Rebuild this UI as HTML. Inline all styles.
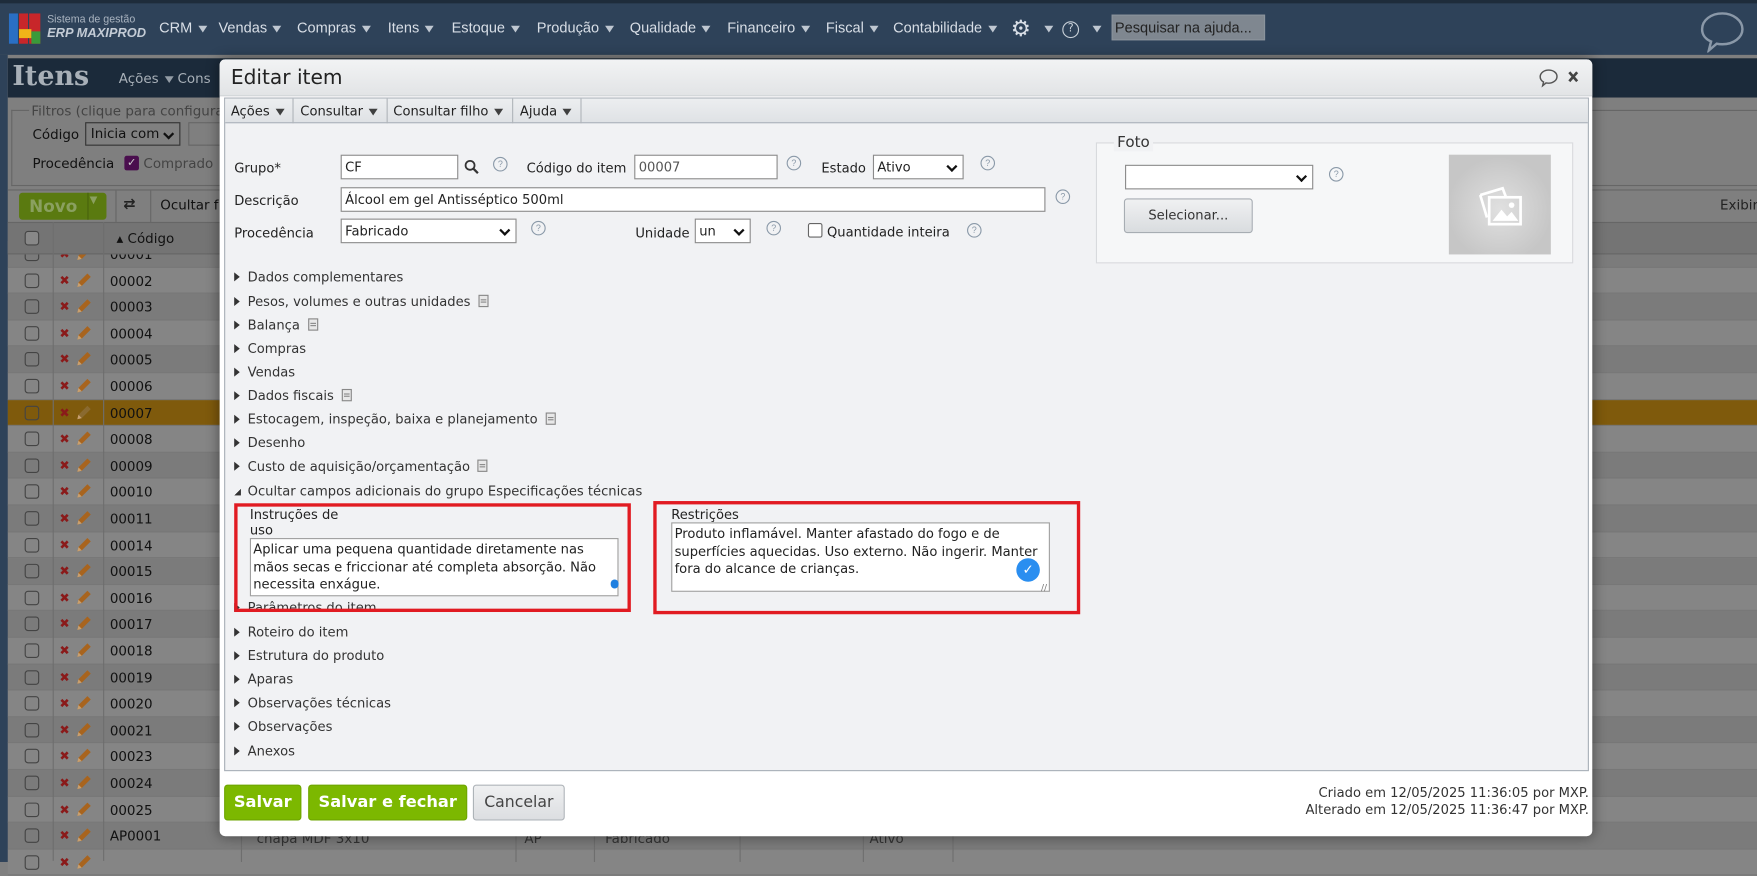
<!DOCTYPE html>
<html><head><meta charset="utf-8">
<style>
*{box-sizing:border-box;margin:0;padding:0}
html,body{width:1757px;height:862px;overflow:hidden;background:#808080}
#s{position:absolute;left:0;top:0;width:1568px;height:769px;transform:scale(1.12054,1.1209);transform-origin:0 0;font-family:"DejaVu Sans","Liberation Sans",sans-serif;font-size:11.7px;color:#222;background:#7f7f7f}
.a{position:absolute;white-space:nowrap}
.nav{position:absolute;left:0;top:0;width:1568px;height:49px;background:#2e4259;border-top:3px solid #1e2c3b}
.nm{position:absolute;top:17px;color:#d8dee6;font-family:"Liberation Sans",sans-serif;font-size:13px}
.dn{display:inline-block;width:0;height:0;border-left:4px solid transparent;border-right:4px solid transparent;border-top:6px solid currentColor;vertical-align:middle;margin-left:5px;opacity:.85}
.row{position:absolute;left:7px;width:1561px;height:23.7px;border-bottom:1px solid #777}
.cb{position:absolute;width:13px;height:13px;border:1px solid #444;border-radius:3px;background:#888}
.q{position:absolute;width:13px;height:13px;border:1px solid #8a99a8;border-radius:50%;font-size:8px;line-height:11px;text-align:center;color:#8a99a8;font-family:"Liberation Sans",sans-serif}
.inp{position:absolute;height:22px;border:1px solid #8b8b8b;background:#fff;padding:3px 3px;font-size:11.7px;line-height:14px}
.sel:after{content:"";position:absolute;right:6px;top:6px;width:5px;height:5px;border-right:2px solid #111;border-bottom:2px solid #111;transform:rotate(45deg)}
.sec{position:absolute;left:209px;font-size:11.7px;color:#333}
.sec i{display:inline-block;width:0;height:0;border-left:5px solid #333;border-top:4px solid transparent;border-bottom:4px solid transparent;margin-right:7px;vertical-align:0px}
.doc{display:inline-block;width:9px;height:11px;border:1px solid #888;margin-left:7px;vertical-align:-1px;background:linear-gradient(#888,#888) 1px 3px/5px 1px no-repeat,linear-gradient(#888,#888) 1px 5px/5px 1px no-repeat,#e8e8e8}
.tb{position:absolute;top:88px;height:22px;font-size:11.7px;line-height:22px;color:#222}
.sep{position:absolute;top:88px;width:1px;height:22px;background:#b0b5ba}
.btn{position:absolute;top:700px;height:32px;border-radius:3px;font-weight:bold;font-size:14.5px;line-height:31px;text-align:center;color:#fff;background:#7cb800;border:1px solid #6ea500}
</style></head><body><div id="s">

<!-- top nav -->
<div class="nav"></div>
<div class="a" style="left:8px;top:12px;width:8px;height:27px;background:#2a6fc4"></div>
<div class="a" style="left:17px;top:12px;width:8px;height:27px;background:#c8262a"></div>
<div class="a" style="left:26px;top:12px;width:10px;height:27px;background:#c8262a"></div>
<div class="a" style="left:17px;top:26px;width:11px;height:8px;background:#f0b419"></div>
<div class="a" style="left:28px;top:28px;width:8px;height:11px;background:#3a9a3a"></div>
<div class="a" style="left:42px;top:12px;color:#aab4c0;font-size:9.5px;font-family:'Liberation Sans',sans-serif">Sistema de gestão</div>
<div class="a" style="left:42px;top:24px;color:#c4ccd6;font-size:11.5px;font-style:italic;font-weight:bold;font-family:'Liberation Sans',sans-serif">ERP MAXIPROD</div>
<div class="nm" style="left:142px">CRM<span class="dn"></span></div>
<div class="nm" style="left:195px">Vendas<span class="dn"></span></div>
<div class="nm" style="left:265px">Compras<span class="dn"></span></div>
<div class="nm" style="left:346px">Itens<span class="dn"></span></div>
<div class="nm" style="left:403px">Estoque<span class="dn"></span></div>
<div class="nm" style="left:479px">Produção<span class="dn"></span></div>
<div class="nm" style="left:562px">Qualidade<span class="dn"></span></div>
<div class="nm" style="left:649px">Financeiro<span class="dn"></span></div>
<div class="nm" style="left:737px">Fiscal<span class="dn"></span></div>
<div class="nm" style="left:797px">Contabilidade<span class="dn"></span></div>
<div class="nm" style="left:902px;top:13px;font-size:20px">⚙</div>
<div class="nm" style="left:927px;top:17px"><span class="dn"></span></div>
<div class="a" style="left:948px;top:19px;width:15px;height:15px;border:1.5px solid #c8d0d8;border-radius:50%;color:#c8d0d8;font-size:10px;text-align:center;line-height:12px">?</div>
<div class="nm" style="left:970px;top:17px"><span class="dn"></span></div>
<div class="a" style="left:992px;top:13px;width:137px;height:23px;background:#7f8790;border:1px solid #8a939c;color:#222;font-family:'Liberation Sans',sans-serif;font-size:13px;line-height:21px;padding-left:2px">Pesquisar na ajuda...</div>
<svg class="a" style="left:1516px;top:9px" width="42" height="38" viewBox="0 0 42 38"><path d="M21 3C11 3 3 9 3 17c0 5 3 9 8 11l-2 8 7-6c2 .5 3 .5 5 .5 10 0 18-6 18-13.5S31 3 21 3z" fill="none" stroke="#8a98a8" stroke-width="2.2"/></svg>

<!-- background page (dimmed) -->
<div class="a" style="left:0;top:49px;width:7px;height:720px;background:#2e4259"></div>

<div id="rows"></div>
<script>
(function(){
var codes=["00001","00002","00003","00004","00005","00006","00007","00008","00009","00010","00011","00014","00015","00016","00017","00018","00019","00020","00021","00023","00024","00025","AP0001",""];
var h="";
for(var i=0;i<codes.length;i++){
 var y=215+i*23.6;
 var hl=codes[i]=="00007";
 var bg=hl?"#7f5a0c":(i%2?"#858585":"#7b7b7b");
 h+='<div class="row" style="top:'+y+'px;background:'+bg+'"></div>';
 h+='<div class="cb" style="left:22px;top:'+(y+5)+'px;background:'+bg+'"></div>';
 h+='<div class="a" style="left:53px;top:'+(y+5)+'px;color:#8a1a1a;font-weight:bold;font-size:11px">✖</div>';
 h+='<svg class="a" style="left:66px;top:'+(y+3)+'px" width="16" height="16" viewBox="0 0 16 16"><path d="M3 14l1-4 8-8 3 3-8 8z" fill="'+(hl?"#8a6a30":"#a8641e")+'"/><path d="M3 14l1-4 3 3z" fill="#c8a070"/></svg>';
 h+='<div class="a" style="left:98px;top:'+(y+5)+'px;color:#111;font-size:12px">'+codes[i]+'</div>';
}
document.getElementById("rows").innerHTML=h;
})();
</script>

<div class="a" style="left:7px;top:49px;width:1561px;height:177px;background:#7f7f7f"></div>
<div class="a" style="left:7px;top:52px;width:1561px;height:35px;background:#1b2a3a"></div>
<div class="a" style="left:11px;top:53px;color:#a8b0b8;font-family:'DejaVu Serif','Liberation Serif',serif;font-weight:bold;font-size:24px">Itens</div>
<div class="a" style="left:106px;top:63px;color:#a8b0b8;font-size:12px">Ações<span class="dn"></span> Cons</div>
<div class="a" style="left:10px;top:98px;width:1558px;height:68px;border:1px solid #666;border-right:none"></div>
<div class="a" style="left:26px;top:92px;background:#7f7f7f;color:#444;padding:0 2px;font-size:12px">Filtros (clique para configura</div>
<div class="a" style="left:29px;top:113px;color:#111;font-size:12px">Código</div>
<div class="inp sel" style="left:76px;top:109px;width:85px;height:21px;background:#808080;border-color:#333;color:#111;font-size:12px;padding:2px 4px">Inicia com</div>
<div class="a" style="left:168px;top:109px;width:40px;height:21px;border:1px solid #666"></div>
<div class="a" style="left:29px;top:139px;color:#111;font-size:12px">Procedência</div>
<div class="a" style="left:111px;top:139px;width:13px;height:13px;background:#4a0e4e;border-radius:2px;color:#ccc;font-size:10px;line-height:13px;text-align:center">✓</div>
<div class="a" style="left:128px;top:139px;color:#444;font-size:12px">Comprado</div>
<div class="a" style="left:7px;top:169px;width:1561px;height:1px;background:#666"></div>
<div class="a" style="left:17px;top:172px;width:78px;height:24px;background:#5a7a10;border-radius:3px;color:#8aa060;font-weight:bold;font-size:15px;line-height:24px;padding-left:9px">Novo</div>
<div class="a" style="left:78px;top:172px;width:1px;height:24px;background:#48620c"></div>
<div class="a" style="left:80px;top:174px;color:#8aa060;font-size:9px">▼</div>
<div class="a" style="left:103px;top:170px;width:1px;height:28px;background:#666"></div>
<div class="a" style="left:110px;top:175px;color:#222;font-size:13px;font-weight:bold">⇄</div>
<div class="a" style="left:134px;top:170px;width:1px;height:28px;background:#666"></div>
<div class="a" style="left:143px;top:176px;color:#111;font-size:12px">Ocultar f</div>
<div class="a" style="left:1535px;top:176px;color:#222;font-size:12px">Exibir</div>
<div class="a" style="left:7px;top:198px;width:1561px;height:29px;background:#747474;border-top:1px solid #666;border-bottom:1px solid #666"></div>
<div class="cb" style="left:22px;top:206px"></div>
<div class="a" style="left:47px;top:198px;width:1px;height:570px;background:#6e6e6e"></div>
<div class="a" style="left:92px;top:198px;width:1px;height:570px;background:#6e6e6e"></div>
<div class="a" style="left:104px;top:206px;color:#111;font-size:12px">▴ Código</div>

<div class="a" style="left:215px;top:740px;width:1px;height:29px;background:#6e6e6e"></div>
<div class="a" style="left:229px;top:741px;color:#333;font-size:12px">chapa MDF 3x10</div>
<div class="a" style="left:460px;top:740px;width:1px;height:29px;background:#6e6e6e"></div>
<div class="a" style="left:468px;top:741px;color:#333;font-size:12px">AP</div>
<div class="a" style="left:530px;top:740px;width:1px;height:29px;background:#6e6e6e"></div>
<div class="a" style="left:540px;top:741px;color:#333;font-size:12px">Fabricado</div>
<div class="a" style="left:660px;top:740px;width:1px;height:29px;background:#6e6e6e"></div>
<div class="a" style="left:770px;top:740px;width:1px;height:29px;background:#6e6e6e"></div>
<div class="a" style="left:776px;top:741px;color:#333;font-size:12px">Ativo</div>
<div class="a" style="left:850px;top:740px;width:1px;height:29px;background:#6e6e6e"></div>

<!-- modal -->
<div class="a" style="left:196px;top:53px;width:1225px;height:693px;background:#fff;border-radius:5px;box-shadow:0 0 12px rgba(0,0,0,.45)"></div>
<div class="a" style="left:196px;top:53px;width:1225px;height:33px;background:linear-gradient(#f2f3f4,#e2e4e6);border-radius:5px 5px 0 0;border-bottom:1px solid #c4c8cc"></div>
<div class="a" style="left:206px;top:59px;font-size:18px;color:#222;font-family:'DejaVu Sans',sans-serif">Editar item</div>
<svg class="a" style="left:1373px;top:61px" width="18" height="17" viewBox="0 0 18 17"><path d="M9 1.5C4.8 1.5 1.5 4.2 1.5 7.5c0 2 1.2 3.7 3 4.7l-.8 3.3 3-2.5c.8.2 1.5.2 2.3.2 4.2 0 7.5-2.7 7.5-6S13.2 1.5 9 1.5z" fill="none" stroke="#555" stroke-width="1.3"/></svg>
<svg class="a" style="left:1399px;top:63px" width="10" height="11" viewBox="0 0 10 11"><path d="M1.5 1.5l7 8M8.5 1.5l-7 8" stroke="#444" stroke-width="2.4"/></svg>

<div class="a" style="left:200px;top:87px;width:1218px;height:601px;border:1px solid #a9b0b8;background:#f1f2f4"></div>
<div class="a" style="left:201px;top:88px;width:1216px;height:22px;background:linear-gradient(#eceef0,#dfe2e5);border-bottom:1px solid #a9b0b8"></div>
<div class="tb" style="left:206px">Ações<span class="dn"></span></div>
<div class="sep" style="left:261px"></div>
<div class="tb" style="left:268px">Consultar<span class="dn"></span></div>
<div class="sep" style="left:345px"></div>
<div class="tb" style="left:351px">Consultar filho<span class="dn"></span></div>
<div class="sep" style="left:457px"></div>
<div class="tb" style="left:464px">Ajuda<span class="dn"></span></div>
<div class="sep" style="left:518px"></div>

<!-- form -->
<div class="a" style="left:209px;top:143px">Grupo*</div>
<div class="inp" style="left:304px;top:138px;width:105px">CF</div>
<svg class="a" style="left:414px;top:142px" width="14" height="14" viewBox="0 0 14 14"><circle cx="5.5" cy="5.5" r="4" fill="none" stroke="#333" stroke-width="1.6"/><path d="M8.5 8.5l4 4" stroke="#333" stroke-width="2"/></svg>
<div class="q" style="left:440px;top:140px">?</div>
<div class="a" style="left:470px;top:143px">Código do item</div>
<div class="inp" style="left:566px;top:138px;width:128px;color:#555">00007</div>
<div class="q" style="left:702px;top:139px">?</div>
<div class="a" style="left:733px;top:143px">Estado</div>
<div class="inp sel" style="left:779px;top:138px;width:81px">Ativo</div>
<div class="q" style="left:875px;top:139px">?</div>

<div class="a" style="left:209px;top:172px">Descrição</div>
<div class="inp" style="left:304px;top:167px;width:629px">Álcool em gel Antisséptico 500ml</div>
<div class="q" style="left:942px;top:169px">?</div>

<div class="a" style="left:209px;top:201px">Procedência</div>
<div class="inp sel" style="left:304px;top:195px;width:157px">Fabricado</div>
<div class="q" style="left:474px;top:197px">?</div>
<div class="a" style="left:567px;top:201px">Unidade</div>
<div class="inp sel" style="left:620px;top:195px;width:50px">un</div>
<div class="q" style="left:684px;top:197px">?</div>
<div class="a" style="left:721px;top:199px;width:13px;height:13px;border:1px solid #666;border-radius:2px;background:#fff"></div>
<div class="a" style="left:738px;top:200px">Quantidade inteira</div>
<div class="q" style="left:863px;top:199px">?</div>

<!-- foto -->
<div class="a" style="left:978px;top:127px;width:426px;height:108px;border:1px solid #d8dadd;background:#f6f7f8"></div>
<div class="a" style="left:994px;top:119px;padding:0 3px;background:#f1f2f4;font-size:13.5px;color:#333">Foto</div>
<div class="inp sel" style="left:1004px;top:147px;width:168px"></div>
<div class="q" style="left:1186px;top:149px">?</div>
<div class="a" style="left:1003px;top:177px;width:115px;height:31px;border:1px solid #a7adb3;border-radius:3px;background:linear-gradient(#f0f1f2,#d9dcdf);text-align:center;line-height:29px;color:#333">Selecionar...</div>
<div class="a" style="left:1293px;top:138px;width:91px;height:89px;background:radial-gradient(circle at 50% 55%,#e0e0e0,#c6c6c6 70%)"></div>
<svg class="a" style="left:1313px;top:158px" width="52" height="52" viewBox="0 0 52 52"><g fill="none" stroke="#fff" stroke-width="2.4"><path d="M8 16l20-6 3 8"/><path d="M8 16l6 20"/><rect x="16" y="18" width="28" height="24"/></g><path d="M19 39l8-10 5 6 4-4 6 8z" fill="#fff"/><circle cx="36" cy="25" r="2.5" fill="#fff"/></svg>

<!-- sections -->
<div class="sec" style="top:240px"><i></i>Dados complementares</div>
<div class="sec" style="top:262px"><i></i>Pesos, volumes e outras unidades<span class="doc"></span></div>
<div class="sec" style="top:283px"><i></i>Balança<span class="doc"></span></div>
<div class="sec" style="top:304px"><i></i>Compras</div>
<div class="sec" style="top:325px"><i></i>Vendas</div>
<div class="sec" style="top:346px"><i></i>Dados fiscais<span class="doc"></span></div>
<div class="sec" style="top:367px"><i></i>Estocagem, inspeção, baixa e planejamento<span class="doc"></span></div>
<div class="sec" style="top:388px"><i></i>Desenho</div>
<div class="sec" style="top:409px"><i></i>Custo de aquisição/orçamentação<span class="doc"></span></div>
<div class="sec" style="top:431px"><i style="border:none;width:6px;height:6px;background:linear-gradient(135deg,transparent 50%,#333 50%);margin-right:6px"></i>Ocultar campos adicionais do grupo Especificações técnicas</div>

<div class="sec" style="top:535px"><i></i>Parâmetros do item</div>
<div class="sec" style="top:557px"><i></i>Roteiro do item</div>
<div class="sec" style="top:578px"><i></i>Estrutura do produto</div>
<div class="sec" style="top:599px"><i></i>Aparas</div>
<div class="sec" style="top:620px"><i></i>Observações técnicas</div>
<div class="sec" style="top:641px"><i></i>Observações</div>
<div class="sec" style="top:663px"><i></i>Anexos</div>

<!-- red boxes -->
<div class="a" style="left:223px;top:452px">Instruções de<br>uso</div>
<div class="a" style="left:223px;top:480px;width:329px;height:52px;border:1px solid #a0a0a0;background:#fff;padding:2px 2px;line-height:15.5px;white-space:normal;color:#222">Aplicar uma pequena quantidade diretamente nas mãos secas e friccionar até completa absorção. Não necessita enxágue.</div>
<div class="a" style="left:545px;top:517px;width:7px;height:8px;background:#1e7fe0;border-radius:4px"></div>
<div class="a" style="left:209px;top:449px;width:354px;height:97px;border:3px solid #e11b22"></div>

<div class="a" style="left:599px;top:452px">Restrições</div>
<div class="a" style="left:599px;top:466px;width:338px;height:62px;border:1px solid #a0a0a0;background:#fff;padding:2px 2px;line-height:15.5px;white-space:normal;color:#222">Produto inflamável. Manter afastado do fogo e de superfícies aquecidas. Uso externo. Não ingerir. Manter fora do alcance de crianças.</div>
<div class="a" style="left:907px;top:498px;width:21px;height:21px;background:#2a8ef0;border-radius:50%;color:#fff;font-size:12px;text-align:center;line-height:21px;font-weight:bold">✓</div>
<div class="a" style="left:929px;top:520px;font-size:8px;color:#777">//</div>
<div class="a" style="left:583px;top:447px;width:381px;height:101px;border:3px solid #e11b22"></div>

<!-- buttons -->
<div class="btn" style="left:200px;width:69px">Salvar</div>
<div class="btn" style="left:275px;width:142px">Salvar e fechar</div>
<div class="btn" style="left:422px;width:82px;background:linear-gradient(#eff0f1,#dcdee1);border-color:#aeb3b8;color:#444;font-weight:normal;font-size:14px">Cancelar</div>
<div class="a" style="right:150px;top:700px;text-align:right;line-height:14.5px;color:#333">Criado em 12/05/2025 11:36:05 por MXP.<br>Alterado em 12/05/2025 11:36:47 por MXP.</div>

</div></body></html>
